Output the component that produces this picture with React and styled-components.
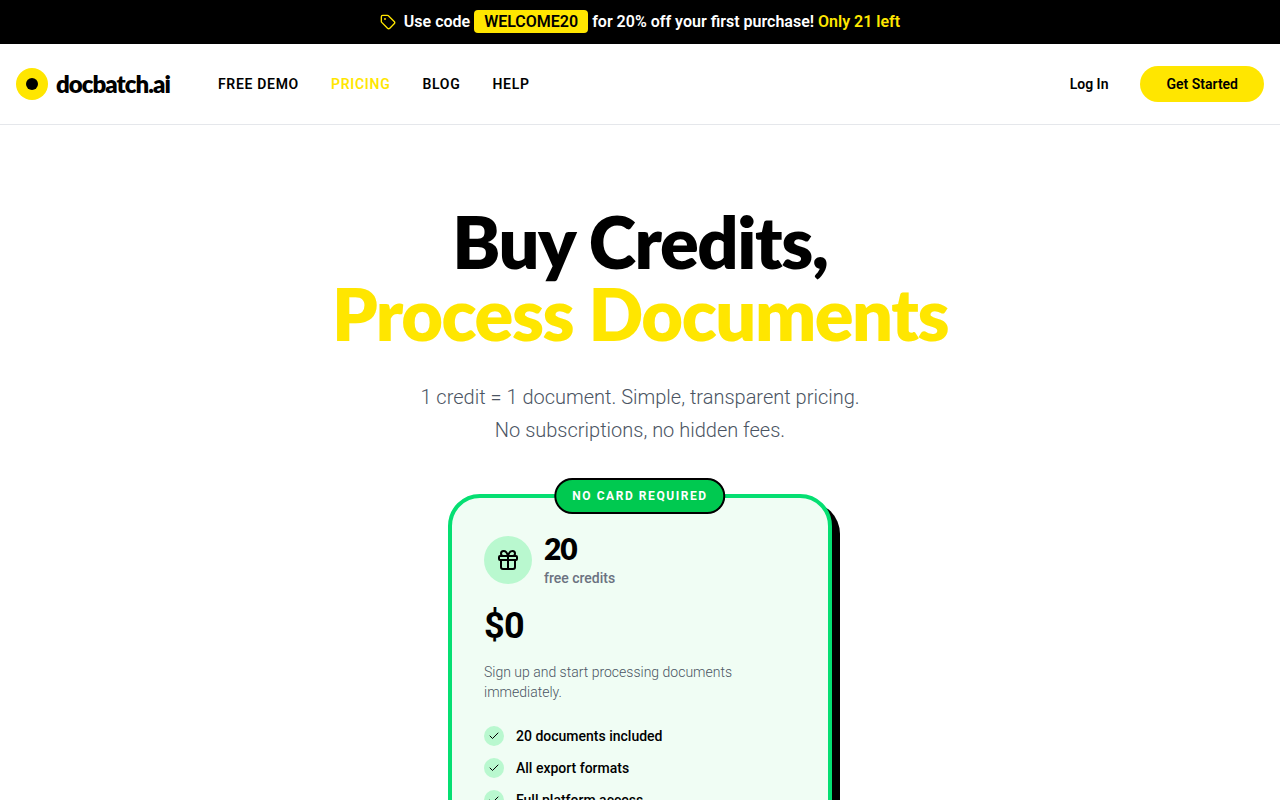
import React from "react"
import styled, { createGlobalStyle } from "styled-components"
import { Check, Gift, Tag } from "lucide-react"

const yellow = "#ffe600"
const displayFont = `Lato, sans-serif`

const GlobalStyle = createGlobalStyle`
  *, *::before, *::after {
    box-sizing: border-box;
  }

  body {
    margin: 0;
    background: #fff;
    color: #000;
    font-family: Roboto, "Liberation Sans", sans-serif;
    font-size: 16px;
    line-height: 24px;
  }

  h1, h2, p, ul {
    margin: 0;
    padding: 0;
  }
`

const Banner = styled.div`
  display: flex;
  align-items: center;
  justify-content: center;
  gap: 8px;
  padding: 10px 16px;
  background: #000;
  color: #fff;
  font-weight: 600;

  svg {
    flex: none;
    color: ${yellow};
  }
`

const Code = styled.span`
  padding: 2px 10px;
  border-radius: 4px;
  background: ${yellow};
  color: #000;
`

const Highlight = styled.span`
  color: ${yellow};
`

const Header = styled.header`
  display: flex;
  align-items: center;
  justify-content: space-between;
  padding: 22px 16px;
  border-bottom: 1px solid #e5e7eb;
`

const HeaderLeft = styled.div`
  display: flex;
  align-items: center;
  gap: 48px;
`

const Logo = styled.a`
  display: flex;
  align-items: center;
  gap: 8px;
  color: #000;
  font-family: ${displayFont};
  font-size: 24px;
  font-weight: 800;
  line-height: 32px;
  letter-spacing: -0.04em;
  text-decoration: none;
`

const LogoMark = styled.span`
  display: flex;
  align-items: center;
  justify-content: center;
  width: 32px;
  height: 32px;
  border-radius: 50%;
  background: ${yellow};

  &::after {
    content: "";
    width: 12px;
    height: 12px;
    border-radius: 50%;
    background: #000;
  }
`

const Nav = styled.nav`
  display: flex;
  gap: 32px;
`

const NavLink = styled.a`
  color: ${props => (props.$active ? yellow : "#000")};
  font-size: 14px;
  font-weight: 600;
  line-height: 20px;
  letter-spacing: 0.05em;
  text-decoration: none;
  text-transform: uppercase;
`

const Actions = styled.div`
  display: flex;
  align-items: center;
  gap: 32px;
`

const LoginLink = styled.a`
  color: #000;
  font-size: 14px;
  font-weight: 600;
  line-height: 20px;
  text-decoration: none;
`

const StartButton = styled.button`
  padding: 8px 26px;
  border: 0;
  border-radius: 18px;
  background: ${yellow};
  color: #000;
  font-family: inherit;
  font-size: 14px;
  font-weight: 600;
  line-height: 20px;
  cursor: pointer;
`

const Main = styled.main`
  display: flex;
  flex-direction: column;
  align-items: center;
  padding: 80px 16px;
`

const Title = styled.h1`
  font-family: ${displayFont};
  font-size: 72px;
  font-weight: 800;
  line-height: 72px;
  letter-spacing: -0.02em;
  text-align: center;
`

const Intro = styled.p`
  margin: 32px 0 47px;
  color: #4b5563;
  font-size: 20px;
  font-weight: 300;
  line-height: 33px;
  text-align: center;
`

const Card = styled.section`
  position: relative;
  width: 100%;
  max-width: 384px;
  padding: 34px 32px 32px;
  border: 4px solid #05df72;
  border-radius: 32px;
  background: #f0fdf4;
  box-shadow: 8px 8px 0 #000;
`

const Badge = styled.span`
  position: absolute;
  top: -20px;
  left: 50%;
  transform: translateX(-50%);
  padding: 8px 16px;
  border: 2px solid #000;
  border-radius: 18px;
  background: #00c950;
  color: #fff;
  font-size: 12px;
  font-weight: 700;
  line-height: 16px;
  letter-spacing: 0.13em;
  text-transform: uppercase;
  white-space: nowrap;
`

const Credits = styled.div`
  display: flex;
  align-items: center;
  gap: 12px;
`

const GiftCircle = styled.div`
  display: flex;
  align-items: center;
  justify-content: center;
  width: 48px;
  height: 48px;
  border-radius: 50%;
  background: #b9f8cf;
`

const Amount = styled.h2`
  margin-bottom: 4px;
  font-family: ${displayFont};
  font-size: 30px;
  font-weight: 800;
  line-height: 32px;
  letter-spacing: -0.04em;
`

const AmountLabel = styled.p`
  color: #6b7280;
  font-size: 14px;
  font-weight: 500;
  line-height: 20px;
`

const Price = styled.p`
  margin: 18px 0 16px;
  font-size: 36px;
  font-weight: 700;
  line-height: 40px;
  letter-spacing: -0.02em;
`

const Description = styled.p`
  color: #4b5563;
  font-size: 14px;
  font-weight: 300;
  line-height: 20px;
`

const Features = styled.ul`
  display: flex;
  flex-direction: column;
  gap: 12px;
  margin: 24px 0 32px;
  list-style: none;
`

const Feature = styled.li`
  display: flex;
  align-items: center;
  gap: 12px;
  font-size: 14px;
  font-weight: 500;
  line-height: 20px;
`

const CheckCircle = styled.span`
  display: flex;
  align-items: center;
  justify-content: center;
  width: 20px;
  height: 20px;
  border-radius: 50%;
  background: #b9f8cf;
`

const links = [
  { label: "Free Demo" },
  { label: "Pricing", active: true },
  { label: "Blog" },
  { label: "Help" },
]

const features = [
  "20 documents included",
  "All export formats",
  "Full platform access",
]

const App = () => (
  <>
    <GlobalStyle />
    <Banner>
      <Tag size={16} />
      <span>
        Use code <Code>WELCOME20</Code> for 20% off your first purchase!{" "}
        <Highlight>Only 21 left</Highlight>
      </span>
    </Banner>
    <Header>
      <HeaderLeft>
        <Logo href="#">
          <LogoMark />
          docbatch.ai
        </Logo>
        <Nav>
          {links.map(link => (
            <NavLink key={link.label} href="#" $active={link.active}>
              {link.label}
            </NavLink>
          ))}
        </Nav>
      </HeaderLeft>
      <Actions>
        <LoginLink href="#">Log In</LoginLink>
        <StartButton type="button">Get Started</StartButton>
      </Actions>
    </Header>
    <Main>
      <Title>
        Buy Credits,
        <br />
        <Highlight>Process Documents</Highlight>
      </Title>
      <Intro>
        1 credit = 1 document. Simple, transparent pricing.
        <br />
        No subscriptions, no hidden fees.
      </Intro>
      <Card>
        <Badge>No card required</Badge>
        <Credits>
          <GiftCircle>
            <Gift size={24} />
          </GiftCircle>
          <div>
            <Amount>20</Amount>
            <AmountLabel>free credits</AmountLabel>
          </div>
        </Credits>
        <Price>$0</Price>
        <Description>
          Sign up and start processing documents immediately.
        </Description>
        <Features>
          {features.map(feature => (
            <Feature key={feature}>
              <CheckCircle>
                <Check size={12} strokeWidth={2} />
              </CheckCircle>
              {feature}
            </Feature>
          ))}
        </Features>
      </Card>
    </Main>
  </>
)

export default App
